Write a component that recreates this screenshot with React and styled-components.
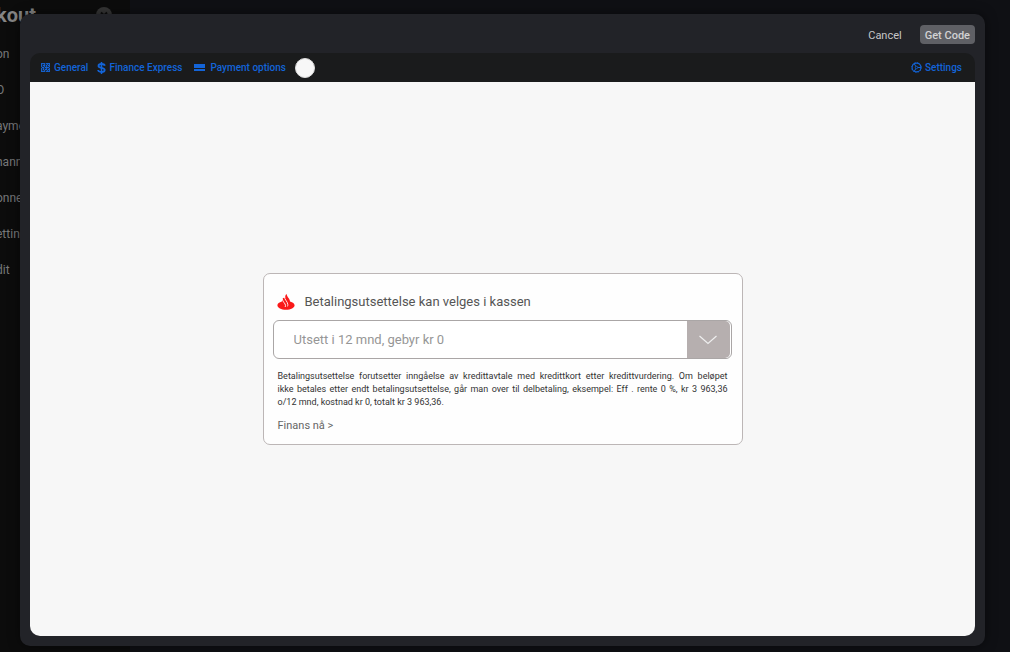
import React from 'react';
import styled, { createGlobalStyle, css } from 'styled-components';

const GlobalStyle = createGlobalStyle`
  * {
    box-sizing: border-box;
  }

  body {
    margin: 0;
    background: #0f1014;
    font-family: Roboto, "Liberation Sans", sans-serif;
  }

  button, select {
    font-family: inherit;
  }
`;

// page behind the dialog
const Page = styled.div`
  position: relative;
  min-height: 100vh;
  overflow: hidden;
`;

const Sidebar = styled.aside`
  width: 130px;
  min-height: 100vh;
  background: #0c0c0c;
  color: #77787a;
`;

const SidebarHeader = styled.div`
  display: flex;
  align-items: center;
  justify-content: space-between;
  height: 30px;
  padding-right: 18px;
`;

const SidebarTitle = styled.h1`
  margin: 0 0 0 -4px;
  font-size: 20px;
  line-height: 30px;
  font-weight: 700;
  color: #858585;
`;

const SidebarList = styled.ul`
  margin: 6px 0 0 -4px;
  padding: 0;
  list-style: none;
`;

const SidebarItem = styled.li`
  font-size: 12px;
  line-height: 36px;
`;

// dialog
const Modal = styled.div`
  position: absolute;
  top: 14px;
  right: 25px;
  bottom: 6px;
  left: 20px;
  display: flex;
  flex-direction: column;
  padding: 0 10px 10px;
  border-radius: 10px;
  background: #222328;
  box-shadow: 0 0 12px rgba(0, 0, 0, 0.5);
`;

const ModalHeader = styled.header`
  display: flex;
  align-items: center;
  justify-content: flex-end;
  gap: 13px;
  height: 39px;
  padding-top: 2px;
`;

const HeaderButton = styled.button`
  height: 19px;
  padding: 1px 5px 0;
  border: 0;
  border-radius: 4px;
  font-size: 11px;
  line-height: 19px;
  font-weight: ${props => props.$primary ? 500 : 400};
  color: ${props => props.$primary ? '#d2d2d3' : '#c6c6c8'};
  background: ${props => props.$primary ? '#5f6065' : 'transparent'};
`;

const Toolbar = styled.nav`
  display: flex;
  align-items: center;
  height: 29px;
  padding: 0 13px 0 11px;
  border-radius: 10px 10px 0 0;
  background: #1a1b1c;
`;

const sharedIconStyle = css`
  display: block;
  flex: none;
`;

const ToolbarButton = styled.button`
  display: flex;
  align-items: center;
  gap: ${props => props.$gap}px;
  margin: 0 ${props => props.$space || 0}px 0 0;
  padding: 0;
  border: 0;
  background: none;
  font-size: 10px;
  line-height: 12px;
  font-weight: 500;
  color: #1364d8;
  white-space: nowrap;
`;

const ThemeSwitch = styled.button`
  width: 20px;
  height: 20px;
  margin-right: auto;
  padding: 0;
  border: 1px solid #dcdcdc;
  border-radius: 50%;
  background: #f7f7f7;
`;

const Preview = styled.main`
  display: flex;
  flex: 1;
  align-items: center;
  justify-content: center;
  border-radius: 0 0 10px 10px;
  background: #f7f7f7;
`;

// finance widget
const Widget = styled.section`
  width: 480px;
  max-width: 100%;
  padding: 18px 10px 10px 9px;
  border: 1px solid #bcb6b6;
  border-radius: 7px;
  background: #fefefe;
`;

const WidgetHeader = styled.div`
  display: flex;
  align-items: center;
  gap: 10px;
  padding-left: 4px;
`;

const WidgetTitle = styled.label`
  font-size: 13px;
  line-height: 20px;
  color: #555;
`;

const SelectWrapper = styled.div`
  display: grid;
  margin-top: 8px;
  overflow: hidden;
  height: 39px;
  border: 1px solid #aaa6a6;
  border-radius: 6px;
  background: #fff;
`;

const Select = styled.select`
  grid-area: 1 / 1;
  appearance: none;
  width: 100%;
  padding: 0 60px 0 20px;
  border: 0;
  background: transparent;
  font-size: 13px;
  color: #969696;
`;

const SelectArrow = styled.span`
  grid-area: 1 / 1;
  justify-self: end;
  display: flex;
  align-items: center;
  justify-content: center;
  width: 43px;
  margin-right: 1px;
  border-radius: 0 5px 5px 0;
  background: #b6afaf;
  pointer-events: none;
`;

const Terms = styled.p`
  margin: 11px 4px 0 5px;
  font-size: 9px;
  line-height: 13px;
  color: #333;
`;

const TermsLine = styled.span`
  display: block;
  text-align: justify;
  text-align-last: ${props => props.$last ? 'left' : 'justify'};
`;

const FinanceLink = styled.a`
  display: block;
  margin: 9px 5px 0;
  font-size: 11px;
  line-height: 16px;
  color: #666;
  text-decoration: none;
`;

const Icon = styled.svg`
  ${sharedIconStyle};
`;

const CloseIcon = () => (
  <Icon width="16" height="16" viewBox="0 0 16 16" aria-hidden="true">
    <circle cx="8" cy="8" r="8" fill="#363636" />
    <path d="M5 5.5l6 6M11 5.5l-6 6" stroke="#0c0c0c" strokeWidth="2" />
  </Icon>
);

const GeneralIcon = () => (
  <Icon width="9" height="9" viewBox="0 0 9 9" fill="none" stroke="currentColor" aria-hidden="true">
    <rect width="9" height="9" fill="currentColor" stroke="none" opacity=".3" />
    <path d="M0 .5h4M5 .5h4M0 8.5h4M5 8.5h4M.5 1v3M.5 5v3M8.5 1v3M8.5 5v3" strokeWidth=".9" />
    <path d="M2 2.5h2M5 2.5h1M7 2.5h1M1 4.5h2M4 4.5h4M2 6.5h1M4 6.5h2M7 6.5h1" />
    <path d="M3.5 3v1M5.5 3v1M3.5 7v1M5.5 5v1M2.5 5v1M6.5 1v1M3.5 1v1M6.5 7v1" strokeWidth=".8" />
  </Icon>
);

const DollarIcon = () => (
  <Icon width="9" height="12" viewBox="0 0 9 12" fill="none" stroke="currentColor" aria-hidden="true">
    <path d="M4.5 0v12" strokeWidth="1.5" />
    <path d="M7.8 3.7C7.4 2.4 6.1 2 4.5 2 2.8 2 1.5 2.7 1.5 3.9 1.5 6.6 7.7 5 7.7 8 7.7 9.3 6.3 10 4.5 10 2.7 10 1.3 9.5 1.1 8" strokeWidth="1.8" />
  </Icon>
);

const CardIcon = () => (
  <Icon width="11" height="8" viewBox="0 0 11 8" fill="currentColor" aria-hidden="true">
    <path d="M0 0h11v4H0zM0 5h11v2H0z" />
  </Icon>
);

const SettingsIcon = () => (
  <Icon width="11" height="11" viewBox="0 0 11 11" fill="none" stroke="currentColor" aria-hidden="true">
    <circle cx="5.5" cy="5.5" r="4.4" strokeWidth="1.1" />
    <circle cx="5.5" cy="5.5" r="5" strokeWidth=".8" strokeDasharray="1.1 1.518" />
    <path d="M5.5 5.5H10M5.5 5.5L3.2 1.7M5.5 5.5L3.2 9.3" strokeWidth="1" />
    <circle cx="5.5" cy="5.5" r="1.2" strokeWidth=".8" fill="#1a1b1c" />
  </Icon>
);

const FlameLogo = () => (
  <Icon width="18" height="16" viewBox="0 0 18 16" aria-hidden="true">
    <path
      d="M4.9 7.5C2.2 8.2.4 9.6.4 11.3.4 13.8 4.2 15.8 9 15.8s8.6-2 8.6-4.5c0-1.7-1.8-3.200-4.600-3.900C13 4.800 10.200 3.500 9.600 0 8.300 1 8 2.400 8.400 3.600L6.200 3.900C5.300 5 5.200 6.300 4.900 7.500z"
      fill="#fa1919"
    />
    <path
      d="M7.400 2.200C7.300 5.700 10.800 7.700 10.800 10.500c0 .8-.1 1.300-.3 1.900M5.400 5C5.400 8 8.500 9.200 8.500 11.500c0 .6-.1 1-.3 1.500"
      fill="none"
      stroke="#fefefe"
      strokeWidth=".9"
    />
  </Icon>
);

const ChevronIcon = () => (
  <Icon width="18" height="10" viewBox="0 0 18 10" fill="none" stroke="#eee" strokeWidth="1.2" aria-hidden="true">
    <path d="M.5 1L9 8.5 17.5 1" />
  </Icon>
);

const menuItems = ['on', 'O', 'ayments', 'hannels', 'onnect', 'ettings', 'dit'];

const termsLines = [
  'Betalingsutsettelse forutsetter inngåelse av kredittavtale med kredittkort etter kredittvurdering. Om beløpet',
  'ikke betales etter endt betalingsutsettelse, går man over til delbetaling, eksempel: Eff . rente 0 %, kr 3 963,36',
  'o/12 mnd, kostnad kr 0, totalt kr 3 963,36.'
];

const App = () => (
  <Page>
    <GlobalStyle />
    <Sidebar>
      <SidebarHeader>
        <SidebarTitle>kout</SidebarTitle>
        <CloseIcon />
      </SidebarHeader>
      <SidebarList>
        {menuItems.map(item => <SidebarItem key={item}>{item}</SidebarItem>)}
      </SidebarList>
    </Sidebar>
    <Modal role="dialog" aria-label="Finance Express">
      <ModalHeader>
        <HeaderButton type="button">Cancel</HeaderButton>
        <HeaderButton type="button" $primary>Get Code</HeaderButton>
      </ModalHeader>
      <Toolbar>
        <ToolbarButton type="button" $gap={4} $space={9}><GeneralIcon />General</ToolbarButton>
        <ToolbarButton type="button" $gap={3} $space={12}><DollarIcon />Finance Express</ToolbarButton>
        <ToolbarButton type="button" $gap={5} $space={9}><CardIcon />Payment options</ToolbarButton>
        <ThemeSwitch type="button" aria-label="Background" />
        <ToolbarButton type="button" $gap={3}><SettingsIcon />Settings</ToolbarButton>
      </Toolbar>
      <Preview>
        <Widget>
          <WidgetHeader>
            <FlameLogo />
            <WidgetTitle htmlFor="plan">Betalingsutsettelse kan velges i kassen</WidgetTitle>
          </WidgetHeader>
          <SelectWrapper>
            <Select id="plan">
              <option>Utsett i 12 mnd, gebyr kr 0</option>
            </Select>
            <SelectArrow><ChevronIcon /></SelectArrow>
          </SelectWrapper>
          <Terms>
            {termsLines.map((line, i) => (
              <TermsLine key={line} $last={i === termsLines.length - 1}>{line}</TermsLine>
            ))}
          </Terms>
          <FinanceLink href="#finans">Finans nå &gt;</FinanceLink>
        </Widget>
      </Preview>
    </Modal>
  </Page>
);

export default App;
